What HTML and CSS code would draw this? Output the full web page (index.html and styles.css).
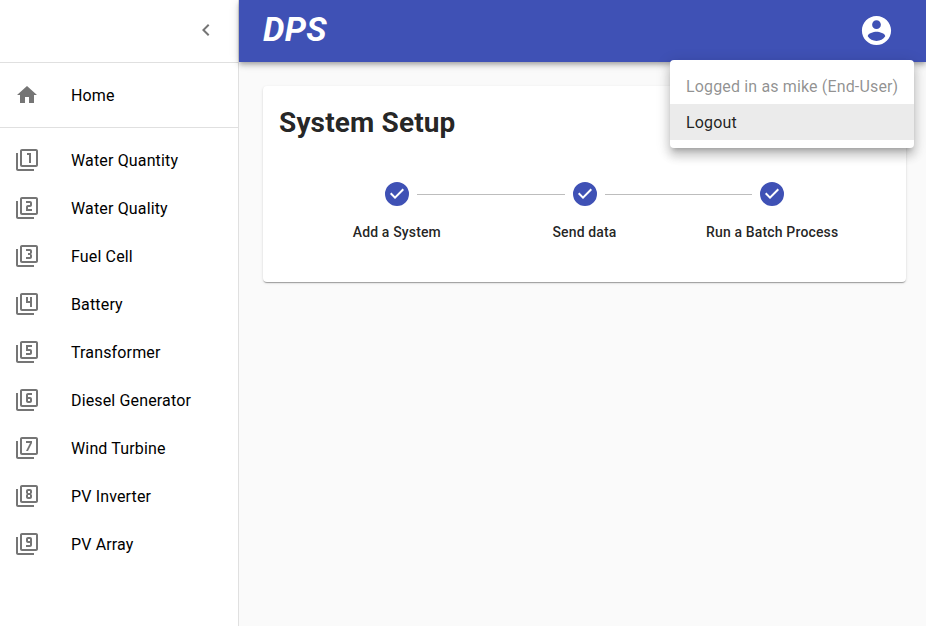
FILE: index.html
```html
<!DOCTYPE html>
<html lang="en">
<head>
<meta charset="utf-8">
<title>DPS</title>
<link rel="stylesheet" href="styles.css">
</head>
<body>
<svg class="defs" aria-hidden="true">
  <symbol id="frame" viewBox="0 0 24 24"><path d="M3 5H1v16c0 1.1.9 2 2 2h16v-2H3V5zM21 1H7c-1.1 0-2 .9-2 2v14c0 1.1.9 2 2 2h14c1.1 0 2-.9 2-2V3c0-1.1-.9-2-2-2zm0 16H7V3h14v14z"/></symbol>
  <symbol id="check" viewBox="0 0 24 24"><path d="M12 0a12 12 0 1 0 0 24 12 12 0 0 0 0-24zm-2 17l-5-5 1.4-1.4 3.6 3.6 7.6-7.6L19 8l-9 9z"/></symbol>
</svg>
<div class="layout">
  <aside class="drawer">
    <div class="drawer-head">
      <button class="icon-button" aria-label="Collapse"><svg class="icon" viewBox="0 0 24 24"><path d="M15.41 7.41L14 6l-6 6 6 6 1.41-1.41L10.83 12z"/></svg></button>
    </div>
    <nav class="list">
      <a class="item"><svg class="icon" viewBox="0 0 24 24"><path d="M10 20v-6h4v6h5v-8h3L12 3 2 12h3v8z"/></svg><span>Home</span></a>
    </nav>
    <nav class="list">
      <a class="item"><svg class="icon" viewBox="0 0 24 24"><use href="#frame"/><path d="M14 15h2V5h-4v2h2v8z"/></svg><span>Water Quantity</span></a>
      <a class="item"><svg class="icon" viewBox="0 0 24 24"><use href="#frame"/><path d="M17 13h-4v-2h2c1.1 0 2-.89 2-2V7c0-1.11-.9-2-2-2h-4v2h4v2h-2c-1.1 0-2 .89-2 2v4h6v-2z"/></svg><span>Water Quality</span></a>
      <a class="item"><svg class="icon" viewBox="0 0 24 24"><use href="#frame"/><path d="M17 13v-1.5c0-.83-.67-1.5-1.5-1.5.83 0 1.5-.67 1.5-1.5V7c0-1.11-.9-2-2-2h-4v2h4v2h-2v2h2v2h-4v2h4c1.1 0 2-.89 2-2z"/></svg><span>Fuel Cell</span></a>
      <a class="item"><svg class="icon" viewBox="0 0 24 24"><use href="#frame"/><path d="M15 15h2V5h-2v4h-2V5h-2v6h4v4z"/></svg><span>Battery</span></a>
      <a class="item"><svg class="icon" viewBox="0 0 24 24"><use href="#frame"/><path d="M17 13v-2c0-1.11-.9-2-2-2h-2V7h4V5h-6v6h4v2h-4v2h4c1.1 0 2-.89 2-2z"/></svg><span>Transformer</span></a>
      <a class="item"><svg class="icon" viewBox="0 0 24 24"><use href="#frame"/><path d="M13 15h2c1.1 0 2-.89 2-2v-2c0-1.11-.9-2-2-2h-2V7h4V5h-4c-1.1 0-2 .89-2 2v6c0 1.11.9 2 2 2zm0-4h2v2h-2v-2z"/></svg><span>Diesel Generator</span></a>
      <a class="item"><svg class="icon" viewBox="0 0 24 24"><use href="#frame"/><path d="M13 15l4-8V5h-6v2h4l-4 8h2z"/></svg><span>Wind Turbine</span></a>
      <a class="item"><svg class="icon" viewBox="0 0 24 24"><use href="#frame"/><path d="M13 15h2c1.1 0 2-.89 2-2v-1.5c0-.83-.67-1.5-1.5-1.5.83 0 1.5-.67 1.5-1.5V7c0-1.11-.9-2-2-2h-2c-1.1 0-2 .89-2 2v1.5c0 .83.67 1.5 1.5 1.5-.83 0-1.5.67-1.5 1.5V13c0 1.11.9 2 2 2zm0-8h2v2h-2V7zm0 4h2v2h-2v-2z"/></svg><span>PV Inverter</span></a>
      <a class="item"><svg class="icon" viewBox="0 0 24 24"><use href="#frame"/><path d="M15 5h-2c-1.1 0-2 .89-2 2v2c0 1.11.9 2 2 2h2v2h-4v2h4c1.1 0 2-.89 2-2V7c0-1.11-.9-2-2-2zm0 4h-2V7h2v2z"/></svg><span>PV Array</span></a>
    </nav>
  </aside>
  <div class="page">
    <header class="appbar">
      <h1 class="brand">DPS</h1>
      <div class="account">
        <svg class="avatar" viewBox="0 0 24 24"><path d="M12 2C6.48 2 2 6.48 2 12s4.48 10 10 10 10-4.48 10-10S17.52 2 12 2zm0 3c1.66 0 3 1.34 3 3s-1.34 3-3 3-3-1.34-3-3 1.34-3 3-3zm0 14.2c-2.5 0-4.71-1.28-6-3.22.03-1.99 4-3.08 6-3.08 1.99 0 5.97 1.09 6 3.08-1.29 1.94-3.5 3.22-6 3.22z"/></svg>
      </div>
      <ul class="menu">
        <li class="menu-item disabled">Logged in as mike (End-User)</li>
        <li class="menu-item selected">Logout</li>
      </ul>
    </header>
    <main class="content">
      <section class="card">
        <h2 class="title">System Setup</h2>
        <div class="stepper">
          <div class="step"><svg class="step-icon"><use href="#check"/></svg><span>Add a System</span></div>
          <div class="step"><svg class="step-icon"><use href="#check"/></svg><span>Send data</span></div>
          <div class="step"><svg class="step-icon"><use href="#check"/></svg><span>Run a Batch Process</span></div>
        </div>
      </section>
    </main>
  </div>
</div>
</body>
</html>
```
FILE: styles.css
```css
* { box-sizing: border-box; }
body {
  margin: 0;
  background: #fafafa;
  color: rgba(0, 0, 0, 0.87);
  font: 400 16px/1.5 Roboto, "Liberation Sans", sans-serif;
  letter-spacing: 0.00938em;
}
.defs { position: absolute; width: 0; height: 0; }
.layout { display: flex; height: 100vh; overflow: hidden; }
.drawer {
  flex: none;
  width: 239px;
  background: #fff;
  border-right: 1px solid #e0e0e0;
  color: #000;
}
.drawer-head {
  display: flex;
  align-items: center;
  justify-content: flex-end;
  height: 63px;
  padding: 0 8px 3px 0;
  border-bottom: 1px solid #e0e0e0;
}
.icon-button { display: flex; padding: 12px; border: 0; background: none; }
.icon { flex: none; width: 24px; height: 24px; fill: #757575; }
.list { padding: 8px 0; }
.list + .list { border-top: 1px solid #e0e0e0; }
.item { display: flex; align-items: center; gap: 32px; height: 48px; padding: 0 15px; }
.item span { padding-top: 2px; }
.page { flex: 1; min-width: 0; }
.appbar {
  position: relative;
  display: flex;
  align-items: center;
  justify-content: space-between;
  height: 62px;
  padding: 0 32px 0 24px;
  background: #3f51b5;
  color: #fff;
  box-shadow: 0 2px 4px -1px rgba(0,0,0,.2), 0 4px 5px 0 rgba(0,0,0,.14), 0 1px 10px 0 rgba(0,0,0,.12);
}
.brand {
  margin: 0 0 4px;
  font-size: 34px;
  font-style: italic;
  font-weight: 700;
  line-height: 42px;
  letter-spacing: 0.00938em;
}
.account { display: flex; margin-bottom: 1px; }
.avatar { width: 35px; height: 35px; fill: #fff; }
.menu {
  position: absolute;
  top: 60px;
  right: 12px;
  z-index: 1;
  width: 244px;
  margin: 0;
  padding: 8px 0;
  list-style: none;
  white-space: nowrap;
  color: rgba(0, 0, 0, 0.87);
  background: #fff;
  border-radius: 4px;
  box-shadow: 0 5px 5px -3px rgba(0,0,0,.2), 0 8px 10px 1px rgba(0,0,0,.14), 0 3px 14px 2px rgba(0,0,0,.12);
}
.menu-item { padding: 7px 16px 5px; }
.disabled { opacity: 0.5; }
.selected { background: #ebebeb; }
.content { padding: 24px 20px 24px 24px; }
.card {
  padding: 16px;
  background: #fff;
  border-radius: 4px;
  box-shadow: 0 2px 1px -1px rgba(0,0,0,.2), 0 1px 1px 0 rgba(0,0,0,.14), 0 1px 3px 0 rgba(0,0,0,.12);
}
.title { margin: 0 0 14px; font-size: 28px; font-weight: 700; line-height: 42px; letter-spacing: 0.005em; }
.stepper { display: flex; padding: 24px; }
.step {
  position: relative;
  flex: 1;
  display: flex;
  flex-direction: column;
  align-items: center;
  gap: 16px;
  font-size: 14px;
  font-weight: 500;
  line-height: 20px;
  letter-spacing: 0.01071em;
  white-space: nowrap;
}
.step-icon { width: 24px; height: 24px; fill: #3f51b5; }
.step + .step::before {
  content: "";
  position: absolute;
  top: 12px;
  left: calc(-50% + 20px);
  right: calc(50% + 20px);
  border-top: 1px solid #bdbdbd;
}
```
